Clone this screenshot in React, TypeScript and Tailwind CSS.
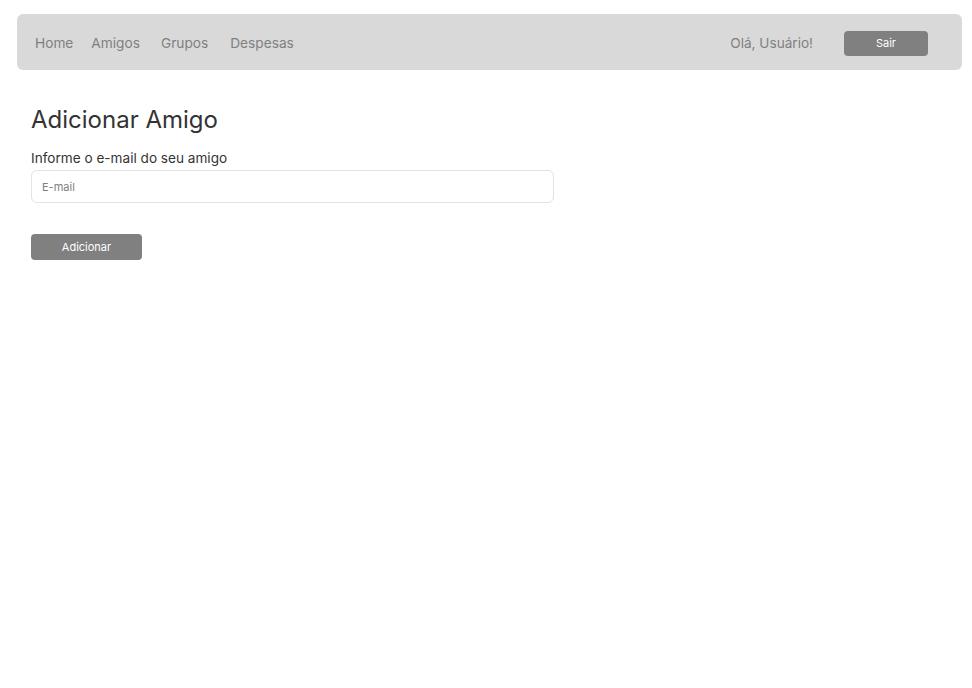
export default function App() {
  const links = [
    { label: 'Home', cls: 'mr-[18px]' },
    { label: 'Amigos', cls: 'mr-[21px]' },
    { label: 'Grupos', cls: 'mr-[22px]' },
    { label: 'Despesas', cls: '' },
  ];

  return (
    <div className="min-h-[688px] w-[972px] bg-white font-['Inter',sans-serif]">
      {/* Navbar */}
      <div className="pt-[14px] pl-[17px] pr-[10px]">
        <nav className="flex h-[56px] items-center rounded-[6px] bg-[#d9d9d9] pt-[2px] pl-[18px] pr-[34px]">
          <div className="flex items-center text-[13.7px] text-[#808080]">
            {links.map((l) => (
              <a key={l.label} className={l.cls}>
                {l.label}
              </a>
            ))}
          </div>
          <div className="ml-auto flex items-center">
            <span className="mr-[31px] text-[13.6px] text-[#808080]">Olá, Usuário!</span>
            <button className="h-[25px] w-[84px] rounded-[4px] bg-[#808080] text-[11px] text-white">
              Sair
            </button>
          </div>
        </nav>
      </div>

      {/* Content */}
      <div className="px-[31px] pt-[34px]">
        <h1 className="text-[24px] leading-[32px] text-[#333333]">Adicionar Amigo</h1>
        <label className="mt-[13px] block text-[13.6px] leading-[18px] text-[#333333]">
          Informe o e-mail do seu amigo
        </label>
        <input
          type="email"
          placeholder="E-mail"
          className="mt-[3px] block h-[33px] w-[523px] rounded-[6px] border border-[#e3e3e3] px-[10px] text-[11px] text-[#333333] placeholder:text-[#808080] outline-none"
        />
        <button className="mt-[31px] h-[26px] w-[111px] rounded-[4px] bg-[#808080] text-[11px] text-white">
          Adicionar
        </button>
      </div>
    </div>
  );
}
